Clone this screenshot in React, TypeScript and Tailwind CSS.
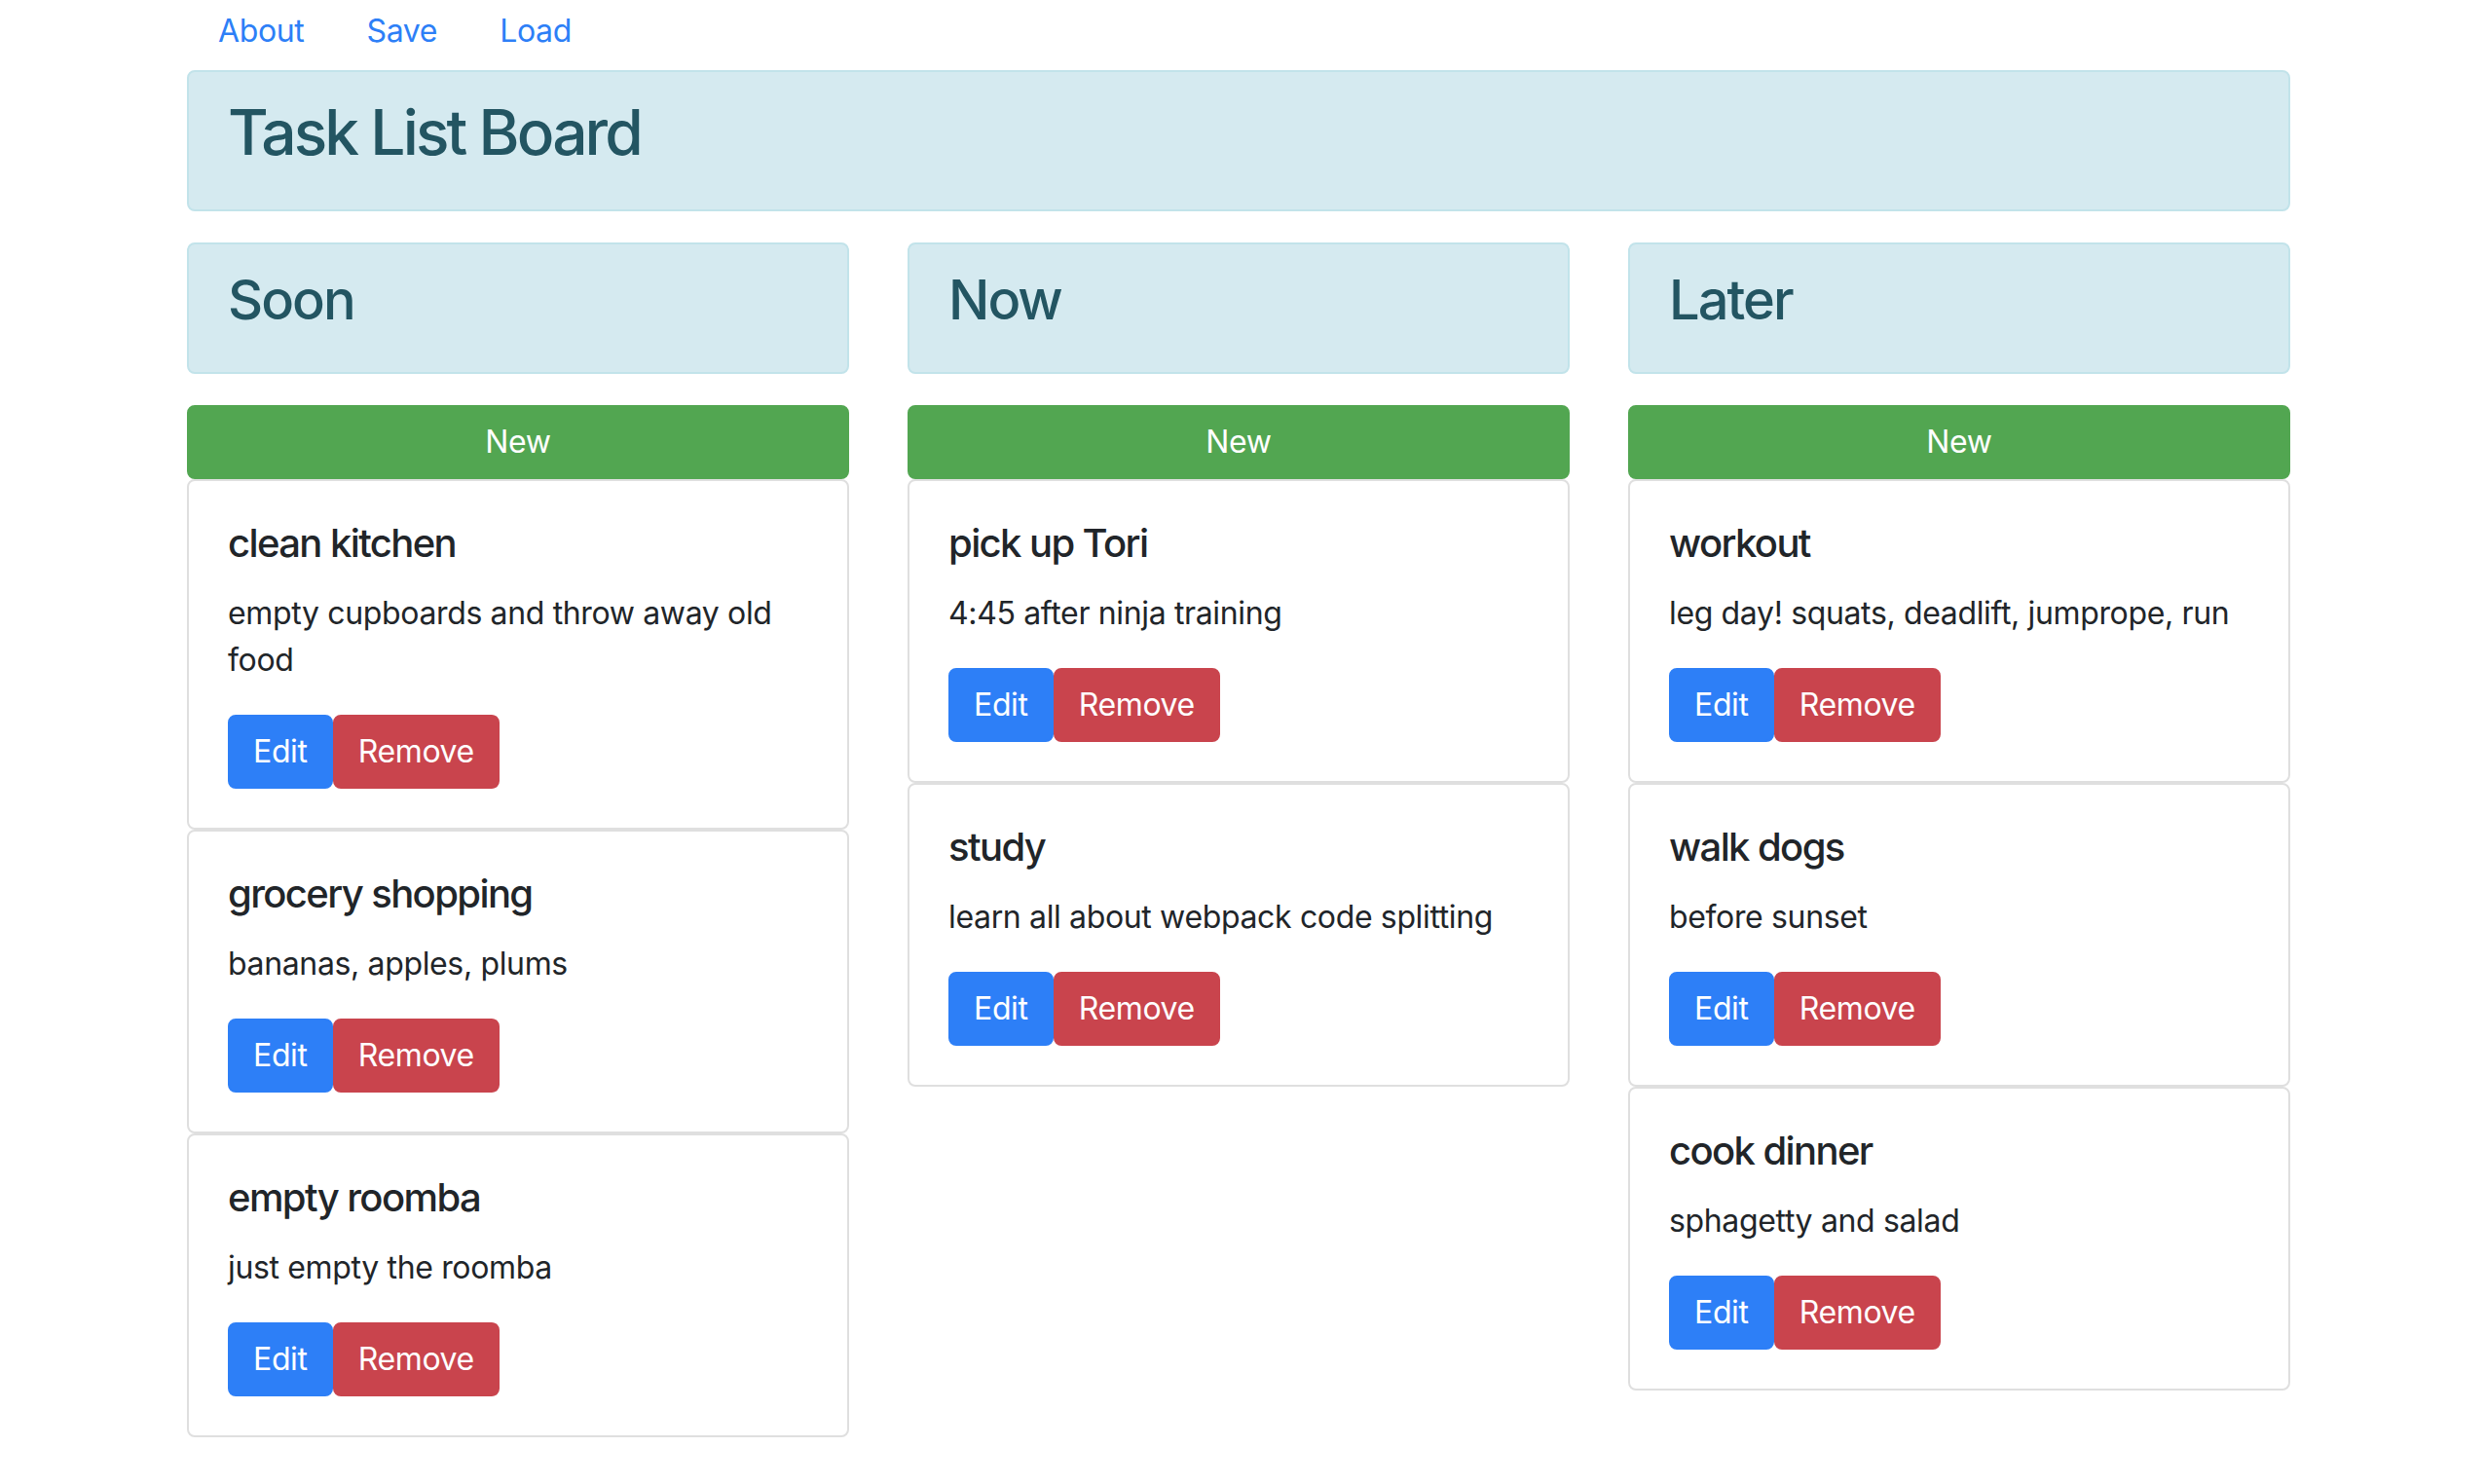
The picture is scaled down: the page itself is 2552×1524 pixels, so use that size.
import React from 'react';

type Task = { title: string; body: string };

const columns: { name: string; tasks: Task[] }[] = [
  {
    name: 'Soon',
    tasks: [
      { title: 'clean kitchen', body: 'empty cupboards and throw away old food' },
      { title: 'grocery shopping', body: 'bananas, apples, plums' },
      { title: 'empty roomba', body: 'just empty the roomba' },
    ],
  },
  {
    name: 'Now',
    tasks: [
      { title: 'pick up Tori', body: '4:45 after ninja training' },
      { title: 'study', body: 'learn all about webpack code splitting' },
    ],
  },
  {
    name: 'Later',
    tasks: [
      { title: 'workout', body: 'leg day! squats, deadlift, jumprope, run' },
      { title: 'walk dogs', body: 'before sunset' },
      { title: 'cook dinner', body: 'sphagetty and salad' },
    ],
  },
];

function TaskCard({ task }: { task: Task }) {
  return (
    <div className="rounded-lg border-2 border-[#dfdfdf] bg-white p-10">
      <h5 className="mb-6 text-[40px] leading-[48px] font-medium tracking-[-0.04em] text-[#212529]">
        {task.title}
      </h5>
      <p className="mb-8 text-[32px] leading-[48px] text-[#212529]">{task.body}</p>
      <div className="flex">
        <button className="rounded-lg border-2 border-[#2d7ff7] bg-[#2d7ff7] px-6 py-3 text-[32px] leading-[48px] text-white">
          Edit
        </button>
        <button className="rounded-lg border-2 border-[#c9444d] bg-[#c9444d] px-6 py-3 text-[32px] leading-[48px] text-white">
          Remove
        </button>
      </div>
    </div>
  );
}

export default function App() {
  return (
    <div className="min-h-screen bg-white font-['Inter','Liberation_Sans',sans-serif] tracking-[-0.022em] text-[#212529]">
      <div className="ml-[192px] w-[2160px]">
        {/* Nav */}
        <nav className="flex pt-2 pb-4">
          {['About', 'Save', 'Load'].map((l) => (
            <a key={l} className="px-8 text-[32px] leading-[48px] text-[#2d7ff7]">
              {l}
            </a>
          ))}
        </nav>

        {/* Board title */}
        <div className="mb-8 rounded-lg border-2 border-[#c2e3ea] bg-[#d5eaf0] px-10 py-6 text-[#235562]">
          <h2 className="mb-4 text-[64px] leading-[1.2] font-medium tracking-[-0.045em]">Task List Board</h2>
        </div>

        {/* Columns */}
        <div className="grid grid-cols-3 gap-[60px]">
          {columns.map((col) => (
            <div key={col.name}>
              <div className="mb-8 rounded-lg border-2 border-[#c2e3ea] bg-[#d5eaf0] px-10 py-6 text-[#235562]">
                <h3 className="mb-4 text-[56px] leading-[1.2] font-medium tracking-[-0.035em]">{col.name}</h3>
              </div>
              <button className="block w-full rounded-lg border-2 border-[#52a651] bg-[#52a651] px-6 py-3 text-center text-[32px] leading-[48px] text-white">
                New
              </button>
              {col.tasks.map((t) => (
                <TaskCard key={t.title} task={t} />
              ))}
            </div>
          ))}
        </div>
      </div>
    </div>
  );
}
